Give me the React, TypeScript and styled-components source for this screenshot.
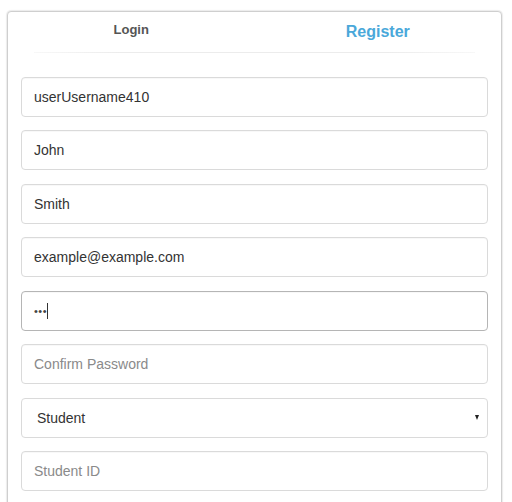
import React from "react";
import styled, { createGlobalStyle } from "styled-components";

const GlobalStyle = createGlobalStyle`
  html, body { margin: 0; padding: 0; background: #fff; }
  body { font-family: "Liberation Sans", Arial, sans-serif; }
  * { box-sizing: border-box; }
`;

const Page = styled.div`
  padding: 11px 10px 0 7px;
`;

const Card = styled.div`
  width: 495px;
  border: 1px solid #cfcfcf;
  border-radius: 4px;
  box-shadow: 0 0 1px 1px #ececec;
  background: #fff;
  padding-bottom: 20px;
`;

const Tabs = styled.div`
  display: grid;
  grid-template-columns: 1fr 1fr;
  height: 40px;
`;

const Tab = styled.div<{ $active?: boolean }>`
  display: flex;
  justify-content: center;
  align-items: flex-start;
  padding-top: ${(p) => (p.$active ? "11px" : "10px")};
  font-weight: bold;
  font-size: ${(p) => (p.$active ? "16px" : "13px")};
  color: ${(p) => (p.$active ? "#4aa8da" : "#555")};
  cursor: pointer;
`;

const Divider = styled.div`
  height: 1px;
  margin: 0 26px;
  background: linear-gradient(to right, rgba(230,230,230,0.3), #ececec 20%, #ececec 80%, rgba(230,230,230,0.3));
`;

const Form = styled.form`
  display: flex;
  flex-direction: column;
  gap: 13.43px;
  padding: 24px 13px 0 13px;
`;

const Input = styled.input<{ $focused?: boolean }>`
  width: 100%;
  height: 40px;
  padding: 0 12px;
  border: 1px solid ${(p) => (p.$focused ? "#b5b5b5" : "#dadada")};
  border-radius: 4px;
  font-family: "Liberation Sans", Arial, sans-serif;
  font-size: 14px;
  color: #333;
  background: #fff;
  outline: none;
  box-shadow: inset 0 1px 1px rgba(0, 0, 0, 0.03);
  &::placeholder { color: #8a8a8a; }
`;

const PasswordInput = styled(Input)`
  font-size: 11px;
  letter-spacing: 0.5px;
  color: #444;
`;

const FieldWrap = styled.div`
  position: relative;
`;

const Caret = styled.span`
  position: absolute;
  left: 26px;
  top: 12px;
  width: 1px;
  height: 16px;
  background: #333;
  pointer-events: none;
`;

const SelectWrap = styled.div`
  position: relative;
  &::after {
    content: "";
    position: absolute;
    right: 9px;
    top: 17px;
    width: 0;
    height: 0;
    border-left: 2.5px solid transparent;
    border-right: 2.5px solid transparent;
    border-top: 5px solid #222;
    pointer-events: none;
  }
`;

const Select = styled.select`
  width: 100%;
  height: 40px;
  padding: 0 12px 0 15px;
  border: 1px solid #dadada;
  border-radius: 4px;
  font-family: "Liberation Sans", Arial, sans-serif;
  font-size: 14px;
  color: #333;
  background: #fff;
  appearance: none;
  -webkit-appearance: none;
  outline: none;
`;

export default function App() {
  return (
    <>
      <GlobalStyle />
      <Page>
        <Card>
          <Tabs>
            <Tab>Login</Tab>
            <Tab $active>Register</Tab>
          </Tabs>
          <Divider />
          <Form onSubmit={(e) => e.preventDefault()}>
            <Input type="text" defaultValue="userUsername410" />
            <Input type="text" defaultValue="John" />
            <Input type="text" defaultValue="Smith" />
            <Input type="email" defaultValue="example@example.com" />
            <FieldWrap>
              <PasswordInput type="password" defaultValue="abc" $focused />
              <Caret />
            </FieldWrap>
            <Input type="password" placeholder="Confirm Password" />
            <SelectWrap>
              <Select defaultValue="student">
                <option value="student">Student</option>
                <option value="teacher">Teacher</option>
              </Select>
            </SelectWrap>
            <Input type="text" placeholder="Student ID" />
          </Form>
        </Card>
      </Page>
    </>
  );
}
